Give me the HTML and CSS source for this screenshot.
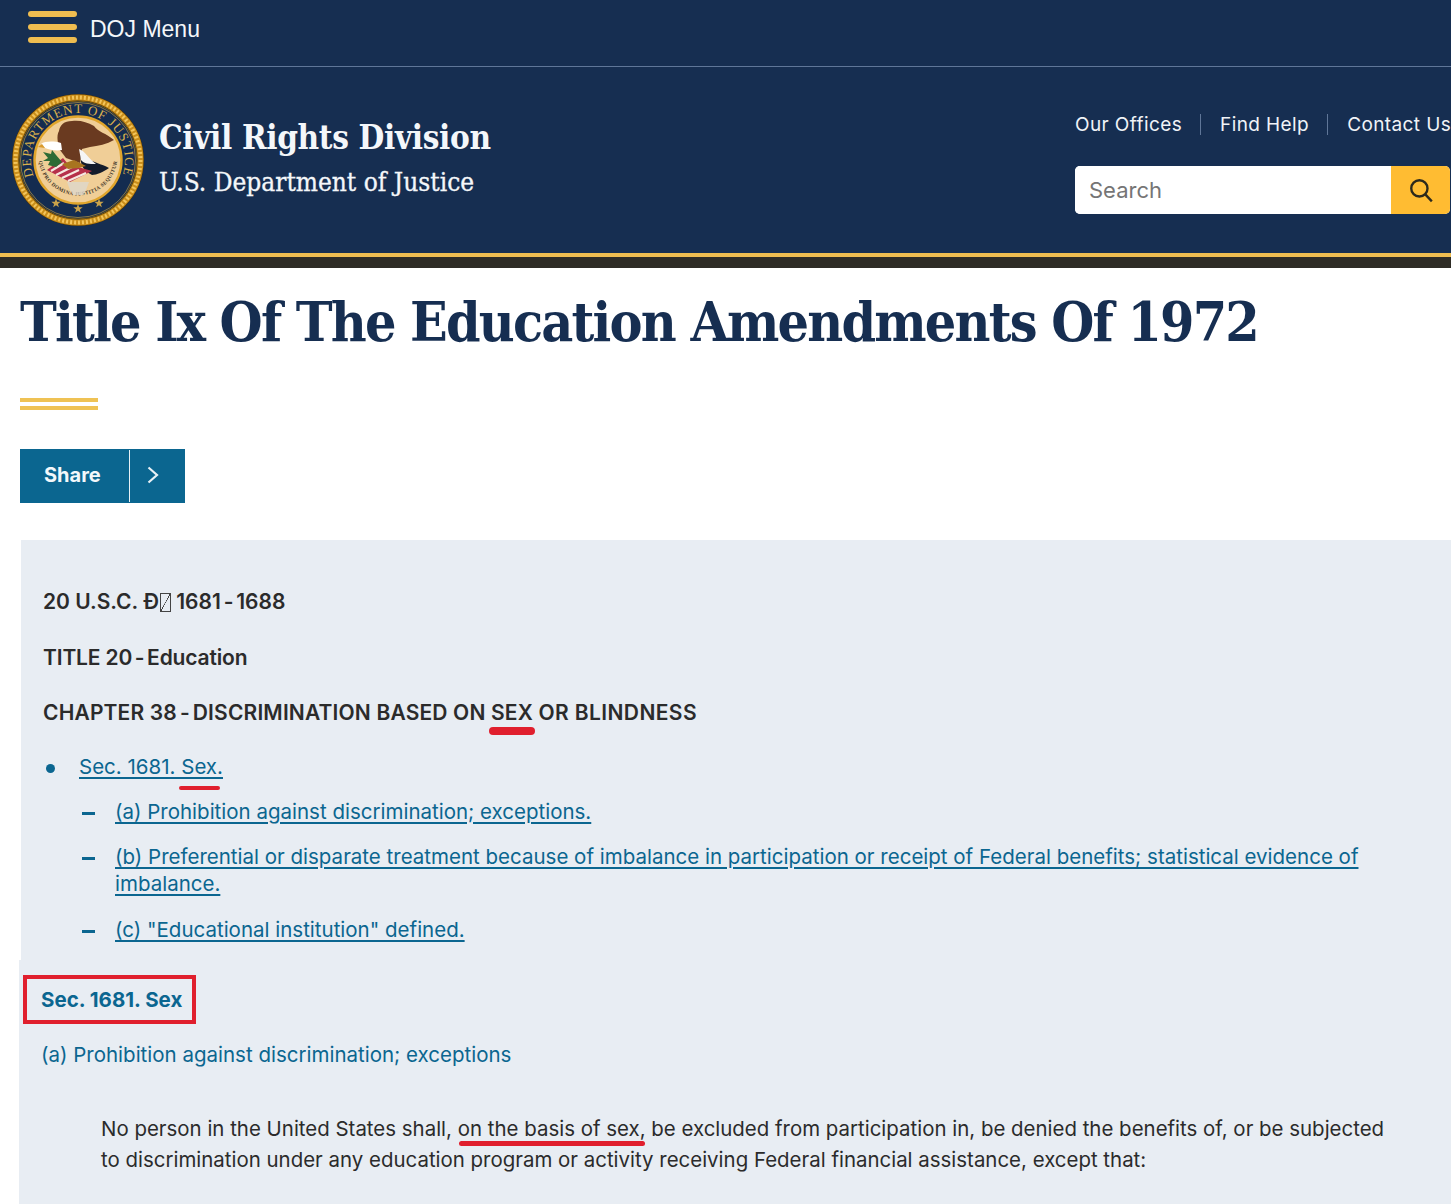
FILE: index.html
```html
<!DOCTYPE html>
<html lang="en">
<head>
<meta charset="utf-8">
<title>Title Ix Of The Education Amendments Of 1972</title>
<link rel="stylesheet" href="styles.css">
</head>
<body>
<header class="site-header">
  <div class="topbar">
    <span class="burger"><i></i><i></i><i></i></span>
    <span class="menu-label">DOJ Menu</span>
  </div>
  <div class="masthead">
    <div class="brand">
      <svg class="seal" viewBox="0 0 132 132" width="132" height="132" aria-hidden="true">
        <defs>
          <path id="arcTop" d="M21.800 82.100 A47 47 0 1 1 110.200 82.100"/>
          <path id="arcLow" d="M26.500 62 A39.500 39.500 0 1 0 105.500 62"/>
        </defs>
        <circle cx="66" cy="66" r="66" fill="#4a3208"/>
        <circle cx="66" cy="66" r="62.500" fill="none" stroke="#c98d1a" stroke-width="6"/>
        <circle cx="66" cy="66" r="62.500" fill="none" stroke="#f3c45a" stroke-width="4" stroke-dasharray="2 2"/>
        <circle cx="66" cy="66" r="59" fill="#142c50" stroke="#7a5a14" stroke-width="1"/>
        <circle cx="66" cy="66" r="57.500" fill="none" stroke="#d8a93a" stroke-width=".6"/>
        <text class="seal-ring"><textPath href="#arcTop" textLength="178" lengthAdjust="spacing">DEPARTMENT OF JUSTICE</textPath></text>
        <circle cx="66" cy="66" r="43.500" fill="#f0ce97" stroke="#e0a52c" stroke-width="2.400"/>
        <text class="seal-motto"><textPath href="#arcLow" startOffset="50%" text-anchor="middle">QUI PRO DOMINA JUSTITIA SEQUITUR</textPath></text>
        <path fill="#dcd8d0" d="M55 88h22l-3 8-3 5h-10l-3-5z" opacity=".75"/>
        <path fill="#6a3a20" d="M60 27C52 27 48 31 47 37 44 42 46 50 48 56L54 64 68 69 70 55 78 53C86 52 95 50 102 46 94 39 86 38 82 32 75 28 68 26 60 27Z"/>
        <path fill="#fff" d="M29 50C33 47 42 47 49 49L50 56C44 57 38 56 33 54Z"/>
        <path fill="#d99a2c" d="M26 53 30 50 33 54Z"/>
        <path fill="#141c2c" d="M68 56 74 64C80 68 90 70 97 74 91 78 85 81 80 81 74 78 70 74 69 68Z"/>
        <path fill="#f5f5f5" d="M67 55C73 57 76 64 84 70 77 70 72 70 69 66Z"/>
        <path fill="#b6304a" d="M35 76 51 64 56 70 80 77 58 88Z"/>
        <path stroke="#f5e8e0" stroke-width="2.200" fill="none" d="M39 77 52 69M44 81 60 73M50 84 67 76M56 87 74 79"/>
        <path fill="#2e6b35" d="M31 58 39 60 40 56 44 61 50 68 44 73 36 71 38 67 31 67 36 64Z"/>
        <path fill="#a87420" d="M50 70 62 66 74 72 66 74 56 75Z"/>
        <g class="seal-star">
          <path d="M44 104.500l1.200 3.300h3.500l-2.800 2.100 1 3.400-2.900-2-2.900 2 1-3.400-2.800-2.100h3.500z"/>
          <path d="M66 110l1.200 3.300h3.500l-2.800 2.100 1 3.400-2.900-2-2.900 2 1-3.400-2.800-2.100h3.500z"/>
          <path d="M87 104.500l1.200 3.300h3.500l-2.800 2.100 1 3.400-2.900-2-2.900 2 1-3.400-2.800-2.100h3.500z"/>
        </g>
      </svg>
      <div class="brand-text">
        <div class="brand-name">Civil Rights Division</div>
        <div class="brand-dept">U.S. Department of Justice</div>
      </div>
    </div>
    <div class="utility">
      <nav class="util-links">
        <a href="#">Our Offices</a>
        <a href="#">Find Help</a>
        <a href="#">Contact Us</a>
      </nav>
      <form class="search">
        <input class="search-input" type="text" placeholder="Search">
        <button class="search-btn" type="button" aria-label="Search">
          <svg viewBox="0 0 24 24" width="26" height="26" fill="none" stroke="#2d2a1c" stroke-width="2.200"><circle cx="10.500" cy="10.500" r="7.500"/><path d="M16 16l6 6.500"/></svg>
        </button>
      </form>
    </div>
  </div>
</header>
<main class="page">
  <h1 class="title">Title Ix Of The Education Amendments Of 1972</h1>
  <div class="title-rule"></div>
  <div class="share">
    <span class="share-label">Share</span>
    <span class="share-arrow"><svg viewBox="0 0 14 20" width="14" height="20" fill="none" stroke="#e8f1f6" stroke-width="2.200"><path d="M2.500 2.500 11 10 2.500 17.500"/></svg></span>
  </div>
  <section class="panel panel-toc">
    <p class="lead">20 U.S.C. Ð<span class="tofu"></span> 1681 <span class="hy">-</span> 1688</p>
    <p class="lead lead-title">TITLE 20 <span class="hy">-</span> Education</p>
    <p class="lead lead-caps">CHAPTER 38 <span class="hy">-</span> DISCRIMINATION BASED ON <span class="mark mark-sex">SEX</span> <span class="lead-tail">OR BLINDNESS</span></p>
    <ul class="toc">
      <li><a href="#"><span class="mark mark-sec">Sec. 1681. Sex.</span></a>
        <ul class="toc-sub">
          <li><a href="#">(a) Prohibition against discrimination; exceptions.</a></li>
          <li><a href="#">(b) Preferential or disparate treatment because of imbalance in participation or receipt of Federal benefits; statistical evidence of imbalance.</a></li>
          <li><a href="#">(c) "Educational institution" defined.</a></li>
        </ul>
      </li>
    </ul>
  </section>
  <section class="panel panel-body">
    <h2 class="sec-title">Sec. 1681. Sex</h2>
    <h3 class="sub-title">(a) Prohibition against discrimination; exceptions</h3>
    <p class="statute">No person in the United States shall, <span class="mark mark-basis">on the basis of sex,</span> be excluded from participation in, be denied the benefits of, or be subjected to discrimination under any education program or activity receiving Federal financial assistance, except that:</p>
  </section>
</main>
</body>
</html>
```
FILE: styles.css
```css
* { box-sizing: border-box; }
html, body { margin: 0; padding: 0; }
body {
  height: 1204px;
  overflow: hidden;
  background: #fff;
  font-family: "Inter", "Liberation Sans", sans-serif;
  color: #2b2b2b;
}
.site-header {
  background: #162e51;
  border-bottom: 11px solid #2e2c26;
}
.site-header::after {
  content: "";
  display: block;
  height: 4px;
  background: #efbd50;
}
.topbar {
  height: 67px;
  border-bottom: 1px solid #5f7698;
  padding: 11px 0 0 28px;
  display: flex;
  align-items: flex-start;
  gap: 13px;
}
.burger { display: flex; flex-direction: column; gap: 7.500px; width: 49px; }
.burger i { display: block; height: 5.500px; border-radius: 3px; background: #efbd50; }
.menu-label {
  font-family: "Liberation Sans", Arial, sans-serif;
  font-size: 23px;
  line-height: 36px;
  color: #f4f7fa;
}
.masthead {
  height: 186px;
  display: flex;
  justify-content: space-between;
  padding: 27px 1px 0 12px;
}
.brand { display: flex; align-items: flex-start; gap: 15px; }
.seal { display: block; }
.seal-ring { font-family: "Liberation Serif", serif; font-size: 13px; fill: #d9b04c; }
.seal-motto { font-family: "Liberation Serif", serif; font-size: 5.300px; fill: #3c3428; letter-spacing: .4px; font-weight: 700; }
.seal-star path { fill: #c9a24a; }
.brand-text { color: #f4f7fa; font-family: "DejaVu Serif Condensed", "DejaVu Serif", serif; font-weight: 700; padding-top: 21px; }
.brand-name { font-size: 33px; line-height: 46px; letter-spacing: -.35px; }
.brand-dept { font-size: 26px; line-height: 34px; font-weight: 400; margin-top: 4px; -webkit-text-stroke: .3px #f4f7fa; }
.utility { width: 375px; padding-top: 20px; }
.util-links { display: flex; height: 21px; align-items: center; }
.util-links a {
  color: #f0f3f7;
  text-decoration: none;
  font-size: 19px;
  letter-spacing: .4px;
  padding-right: 18px;
  margin-right: 19px;
  border-right: 1px solid #5f7698;
  line-height: 21px;
  white-space: nowrap;
}
.util-links a:last-child { border-right: 0; padding-right: 0; margin-right: 0; }
.search { display: flex; height: 48px; margin-top: 31px; border-radius: 5px; overflow: hidden; background: #fff; }
.search-input {
  flex: 1;
  min-width: 0;
  border: 0;
  outline: 0;
  padding: 0 14px;
  font: 22px "Inter", "Liberation Sans", sans-serif;
  background: #fff;
}
.search-input::placeholder { color: #757575; opacity: 1; }
.search-btn {
  width: 59px;
  border: 0;
  padding: 0;
  background: #ffbc32;
  display: flex;
  align-items: center;
  justify-content: center;
}
.page { padding-left: 20px; }
.title {
  margin: 0;
  padding-top: 22px;
  font-family: "DejaVu Serif Condensed", "DejaVu Serif", serif;
  font-weight: 700;
  font-size: 55px;
  line-height: 64px;
  letter-spacing: -1.800px;
  color: #162e51;
  white-space: nowrap;
}
.title-rule {
  width: 78px;
  height: 12px;
  margin-top: 44px;
  border-top: 4px solid #efc254;
  border-bottom: 4px solid #efc254;
}
.share {
  display: flex;
  width: 165px;
  height: 54px;
  margin-top: 39px;
  background: #0b6690;
  color: #f3f8fb;
  align-items: center;
  padding: 1px 0;
}
.share-label {
  width: 110px;
  height: 100%;
  border-right: 1px solid #e8f1f6;
  padding-left: 24px;
  font-weight: 700;
  font-size: 20px;
  line-height: 50px;
}
.share-arrow { flex: 1; display: flex; padding: 0 0 3px 16px; align-items: center; height: 100%; }
.panel { background: #e8edf3; }
.panel-toc {
  margin: 37px 0 0 1px;
  padding: 49px 30px 1px 22px;
  height: 420px;
}
.lead { margin: 0 0 29.500px; font-weight: 600; font-size: 21px; line-height: 26px; }
.hy { margin: 0 -2.500px; }
.lead-title { letter-spacing: -.15px; }
.lead-caps { letter-spacing: .16px; }
.lead-tail { letter-spacing: .4px; }
.mark { position: relative; }
.mark::after { content: ""; position: absolute; background: #e01f2d; border-radius: 4px; }
.mark-sex::after { left: -2px; right: -2px; top: 27px; height: 8px; }
.mark-sec::after { left: 100px; right: 3px; top: 32px; height: 4px; }
.mark-basis::after { left: 1px; right: 1px; top: 25px; height: 5px; }
.toc { margin: -3px 0 0; padding: 0; list-style: none; color: #0b6690; font-size: 20.500px; line-height: 27px; }
.toc a { color: #0b6690; text-decoration: underline; text-decoration-thickness: 1.500px; text-underline-offset: 3px; }
.toc > li { position: relative; padding-left: 36px; }
.toc > li::before { content: ""; position: absolute; left: 3px; top: 11px; width: 9px; height: 9px; border-radius: 50%; background: #0b6690; }
.toc-sub { margin: 0; padding: 0; list-style: none; }
.toc-sub li { position: relative; margin-top: 18.300px; padding-left: 36px; }
.toc-sub li:last-child { margin-top: 19px; }
.toc-sub li::before { content: ""; position: absolute; left: 3px; top: 14px; width: 13px; height: 3px; background: #0b6690; }
.tofu {
  display: inline-block;
  width: 11px;
  height: 19px;
  margin-left: 1px;
  vertical-align: -3px;
  border: 1px solid #444;
  background: linear-gradient(to bottom right, transparent 47%, #444 48%, #444 52%, transparent 53%);
}
.panel-body { margin-left: -1px; padding: 15px 60px 0 4px; height: 244px; }
.sec-title {
  display: inline-block;
  margin: 0;
  padding: 0 10px 0 14px;
  height: 49px;
  border: 4px solid #e01f2d;
  color: #0b6690;
  font-size: 20.500px;
  font-weight: 700;
  line-height: 41px;
}
.sub-title { margin: 16px 0 0 18px; color: #0b6690; font-size: 20.500px; font-weight: 400; line-height: 30px; }
.statute { margin: 43px 0 0 78px; font-size: 20.450px; line-height: 31px; }
```
